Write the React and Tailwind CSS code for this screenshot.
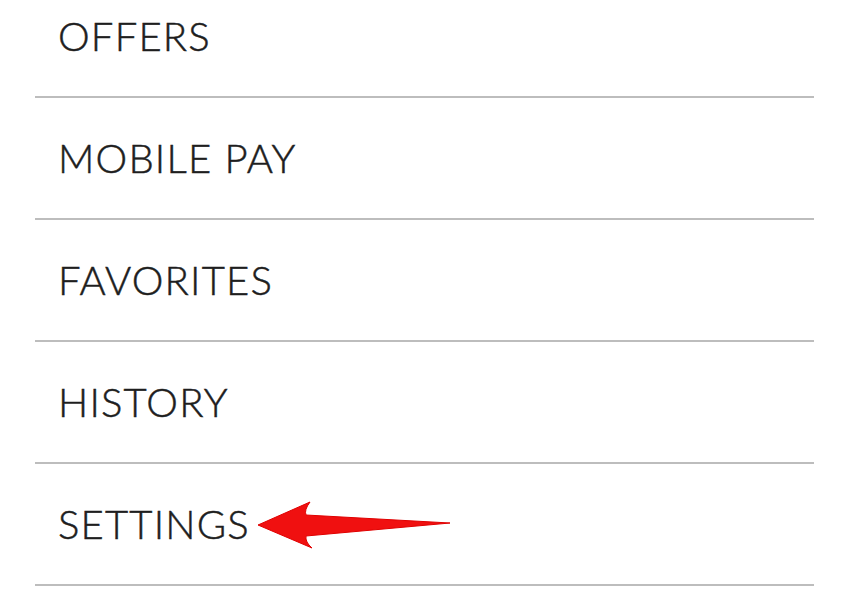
import React from 'react';

const ITEMS = ['OFFERS', 'MOBILE PAY', 'FAVORITES', 'HISTORY', 'SETTINGS'];

function Arrow() {
  return (
    <svg
      className="absolute left-[215px] top-1/2 -translate-y-1/2"
      width="210"
      height="56"
      viewBox="0 0 210 56"
    >
      <path
        d="M8 29 L60 6 Q54 14 56 19 L200 27 L56 40 Q55 46 62 52 Z"
        fill="#f01010"
        stroke="#e00000"
        strokeWidth="1"
        strokeLinejoin="round"
      />
    </svg>
  );
}

export default function App() {
  return (
    <div className="w-[848px] h-[600px] overflow-hidden bg-white" style={{ fontFamily: 'Lato, "Noto Sans", sans-serif' }}>
      <div className="-mt-[24px] mx-[35px] w-[779px]">
        {ITEMS.map((label) => (
          <div
            key={label}
            className="relative flex items-center h-[122px] border-b-2 border-[#bdbdbd] pl-[23px]"
          >
            <span className="text-[40px] font-light leading-none tracking-[1.2px] text-[#1e1e1e] [-webkit-text-stroke:0.5px_#1e1e1e]">
              {label}
            </span>
            {label === 'SETTINGS' && <Arrow />}
          </div>
        ))}
      </div>
    </div>
  );
}
